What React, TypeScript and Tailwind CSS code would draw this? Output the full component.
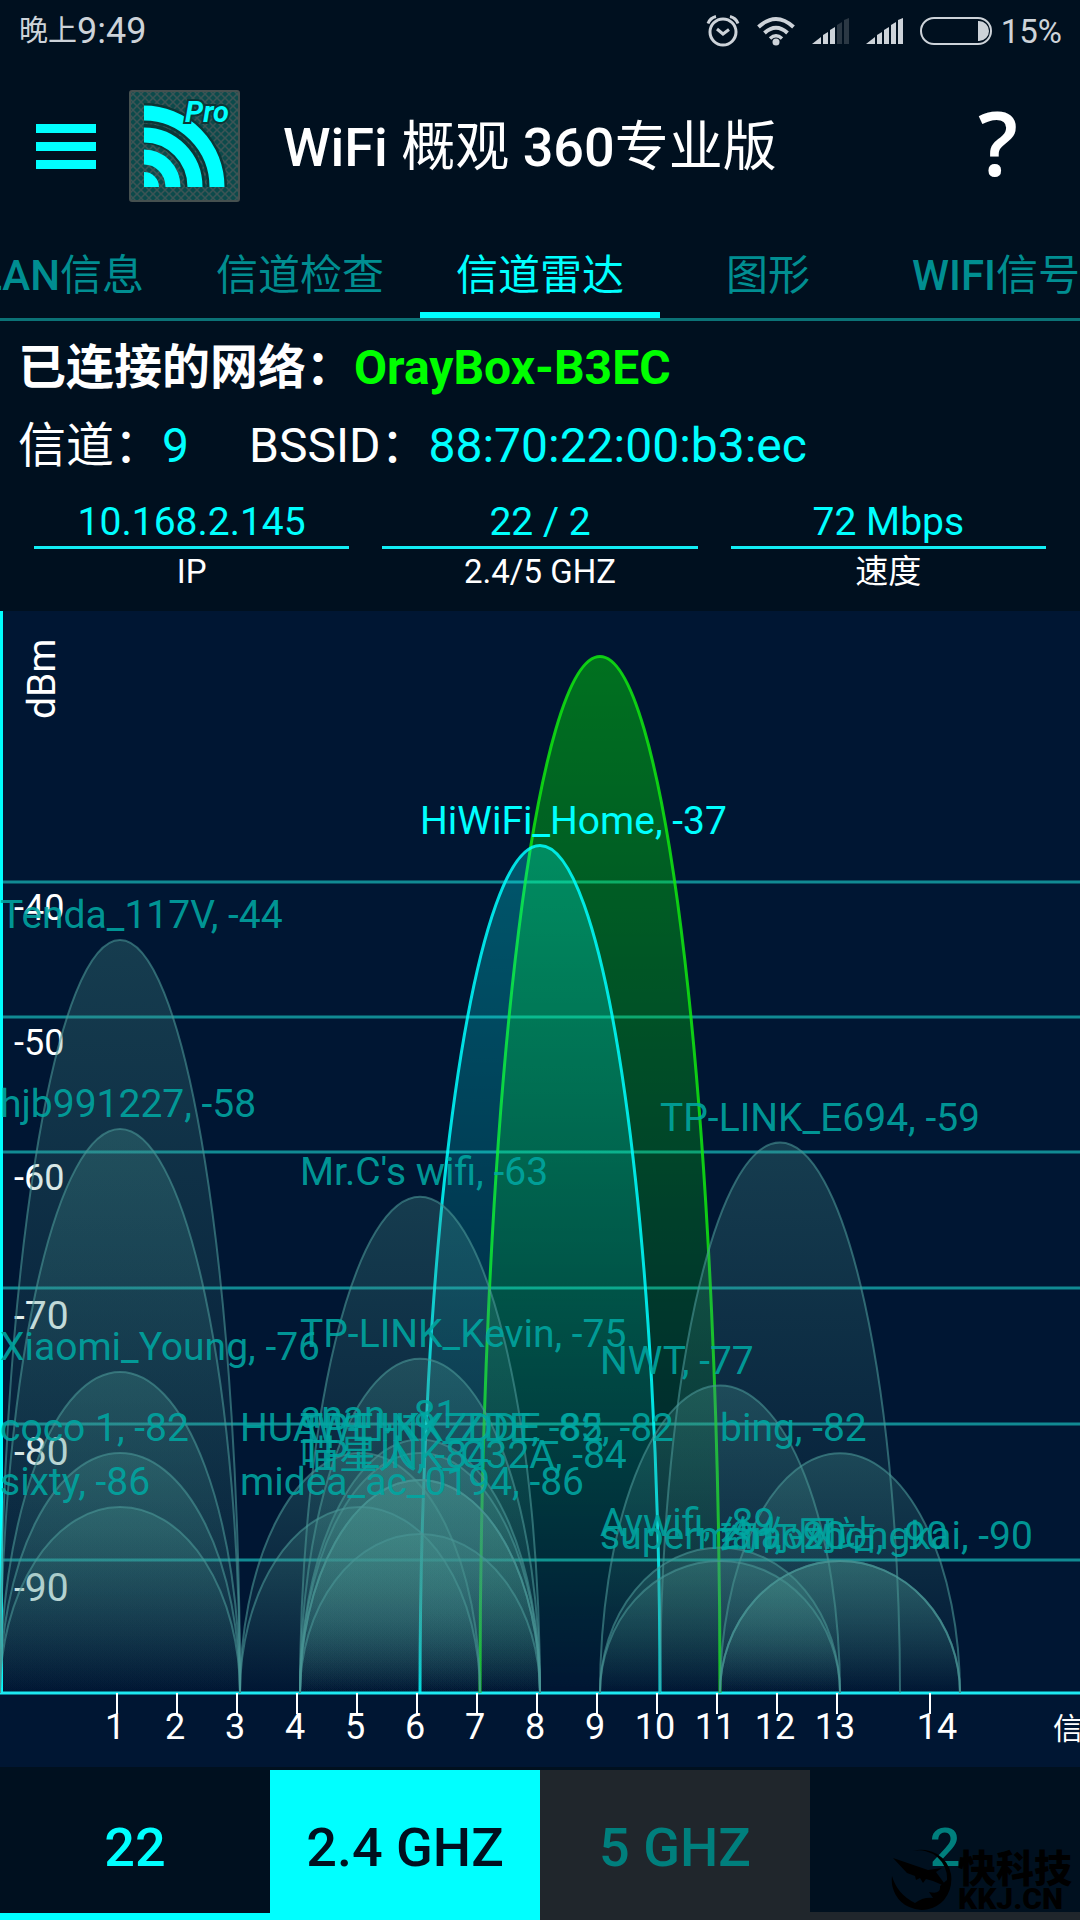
const FONT = "font-[Roboto,'Noto_Sans_CJK_SC',sans-serif]";

type Kind = "weak" | "strong" | "connected";

interface Network {
  label: string;
  channel: number;
  level: number;
  kind?: Kind;
}

const BASE_Y = 1082;

const networks: Network[] = [
  { label: "", channel: 9, level: -23, kind: "connected" },
  { label: "HiWiFi_Home, -37", channel: 8, level: -37, kind: "strong" },
  { label: "Tenda_117V, -44", channel: 1, level: -44 },
  { label: "hjb991227, -58", channel: 1, level: -58 },
  { label: "TP-LINK_E694, -59", channel: 12, level: -59 },
  { label: "Mr.C's wifi, -63", channel: 6, level: -63 },
  { label: "TP-LINK_Kevin, -75", channel: 6, level: -75 },
  { label: "Xiaomi_Young, -76", channel: 1, level: -76 },
  { label: "NWT, -77", channel: 11, level: -77 },
  { label: "anan, -81", channel: 6, level: -81 },
  { label: "TP-LINK_ZDE, -82", channel: 6, level: -82 },
  { label: "HUAWEI-KXZDDE_85, -82", channel: 5, level: -82 },
  { label: "coco 1, -82", channel: 1, level: -82 },
  { label: "bing, -82", channel: 13, level: -82 },
  { label: "TP-LINK_C32A, -84", channel: 6, level: -84 },
  { label: "喵星人, -84", channel: 6, level: -84 },
  { label: "midea_ac_0194, -86", channel: 5, level: -86 },
  { label: "sixty, -86", channel: 1, level: -86 },
  { label: "", channel: 6, level: -88 },
  { label: "Aywifi, -89", channel: 11, level: -89 },
  { label: "superman, -90", channel: 11, level: -90 },
  { label: "约你网站, -90", channel: 13, level: -90 },
  { label: "zhaozhongkai, -90", channel: 13, level: -90 },
];

const gridLines = [
  { y: 271, label: "-40", size: 36, drop: 38 },
  { y: 406, label: "-50", size: 36, drop: 38 },
  { y: 541, label: "-60", size: 36, drop: 38 },
  { y: 677, label: "-70", size: 39, drop: 41 },
  { y: 813, label: "-80", size: 39, drop: 41 },
  { y: 949, label: "-90", size: 39, drop: 41 },
];

const channels = [1, 2, 3, 4, 5, 6, 7, 8, 9, 10, 11, 12, 13, 14];

const strokes: Record<Kind, string> = { weak: "#4a9696", strong: "#00ffff", connected: "#10e810" };
const labelColors: Record<Kind, string> = { weak: "#00a7a2", strong: "#00ffff", connected: "#00ff00" };

const channelX = (n: number) => (n === 14 ? 930 : 57 + n * 60);
const levelY = (level: number) => 949 - 13.5 * (level + 90);

function NetworkCurve({ net }: { net: Network }) {
  const kind = net.kind ?? "weak";
  const left = (net.channel - 2) * 60 + 60;
  const top = levelY(net.level) + 1;
  return (
    <g>
      <path
        d={`M${left} ${BASE_Y} A120 ${BASE_Y - top} 0 0 1 ${left + 240} ${BASE_Y}`}
        fill={`url(#fill-${kind})`}
        stroke={strokes[kind]}
        strokeOpacity={kind === "weak" ? 0.6 : 0.85}
        strokeWidth={kind === "weak" ? 2 : 3}
      />
      <text x={left} y={top - 12} fontSize="39" fill={labelColors[kind]} fillOpacity={kind === "weak" ? 0.9 : 1}>
        {net.label}
      </text>
    </g>
  );
}

function ChannelChart() {
  return (
    <svg viewBox="0 0 1080 1156" className="block w-full bg-[#001633]" role="img" aria-label="信道雷达">
      <defs>
        <linearGradient id="fill-weak" x1="0" y1="0" x2="0" y2="1">
          <stop offset="0" stopColor="#46918c" stopOpacity="0.31" />
          <stop offset="1" stopColor="#46918c" stopOpacity="0" />
        </linearGradient>
        <linearGradient id="fill-strong" x1="0" y1="0" x2="0" y2="1">
          <stop offset="0" stopColor="#00ffff" stopOpacity="0.28" />
          <stop offset="1" stopColor="#00ffff" stopOpacity="0" />
        </linearGradient>
        <linearGradient id="fill-connected" x1="0" y1="0" x2="0" y2="1">
          <stop offset="0" stopColor="#00ff00" stopOpacity="0.39" />
          <stop offset="1" stopColor="#00ff00" stopOpacity="0" />
        </linearGradient>
      </defs>

      {gridLines.map((g) => (
        <g key={g.label}>
          <line x1="0" x2="1080" y1={g.y} y2={g.y} stroke="#118a93" strokeWidth="3" />
          <text x="14" y={g.y + g.drop} fontSize={g.size} fill="#fff">{g.label}</text>
        </g>
      ))}
      <text transform="translate(55 108) rotate(-90)" fontSize="39" fill="#fff">dBm</text>
      <line x1="1" x2="1" y1="0" y2={BASE_Y} stroke="#00ffff" strokeWidth="4" />
      <line x1="0" x2="1080" y1={BASE_Y} y2={BASE_Y} stroke="#1de9f2" strokeWidth="3" />

      {channels.map((n) => (
        <g key={n}>
          <line x1={channelX(n)} x2={channelX(n)} y1={BASE_Y} y2={BASE_Y + 21} stroke="#fff" strokeWidth="2" />
          <text x={n === 14 ? 937 : channelX(n) - 2} y="1128" fontSize="36" textAnchor="middle" fill="#fff">{n}</text>
        </g>
      ))}
      <text x="1053" y="1128" fontSize="30" fill="#fff">信道</text>

      {networks.map((net, i) => <NetworkCurve key={i} net={net} />)}
    </svg>
  );
}

function StatusBar() {
  return (
    <div className="flex h-[62px] items-center justify-between pl-[19px] pr-[18px] text-[#cdd3d9]">
      <div className="flex items-center text-[36px] leading-none">
        <span className="text-[29px]">晚上</span>9:49
      </div>
      <div className="flex items-center gap-[17px]">
        <svg width="34" height="34" viewBox="0 0 34 34" fill="none" stroke="currentColor" strokeWidth="3">
          <circle cx="17" cy="18" r="13" />
          <path d="M11 15l6 5 6-4.500" />
          <path d="M2 9.500Q4 4 10 2.500M32 9.500Q30 4 24 2.500" />
        </svg>
        <svg width="38" height="30" viewBox="0 0 38 30" fill="none" stroke="currentColor" strokeWidth="4">
          <path d="M1.500 11Q19-5 36.500 11" />
          <path d="M7.500 17Q19 6.500 30.500 17" />
          <path d="M13 22.500Q19 17 25 22.500" strokeWidth="3.500" />
          <circle cx="19" cy="26" r="3.500" fill="currentColor" stroke="none" />
        </svg>
        <SignalIcon bars={3} />
        <SignalIcon bars={5} />
        <div className="flex items-center gap-[9px]">
          <svg width="72" height="28" viewBox="0 0 72 28">
            <rect x="1" y="1" width="70" height="26" rx="13" fill="none" stroke="currentColor" strokeWidth="2" />
            <path d="M58 4h1a10 10 0 0 1 0 20h-1z" fill="currentColor" />
          </svg>
          <span className="text-[33px] leading-none">15%</span>
        </div>
      </div>
    </div>
  );
}

function SignalIcon({ bars }: { bars: number }) {
  const shapes = ["M0 26L9 19V26z", "M11 17L16 14V26H11z", "M18 12L23 9V26H18z", "M25 7L30 4V26H25z", "M32 2L37 0V26H32z"];
  return (
    <svg width="37" height="26" viewBox="0 0 37 26">
      {shapes.map((d, i) => <path key={d} d={d} fill={i < bars ? "currentColor" : "#2b3844"} />)}
    </svg>
  );
}

function AppLogo() {
  return (
    <svg width="111" height="112" viewBox="0 0 111 112">
      <defs>
        <pattern id="mesh" width="8" height="8" patternUnits="userSpaceOnUse">
          <rect width="8" height="8" fill="#0c4a4b" />
          <path d="M0 0l8 8M8 0l-8 8" stroke="#3c5455" strokeWidth="1.500" />
        </pattern>
      </defs>
      <rect x="1" y="1" width="109" height="110" rx="2" fill="url(#mesh)" stroke="#45504f" strokeWidth="2" />
      <g fill="none" stroke="#0c3536" strokeWidth="20">
        <path d="M15 44A51 53 0 0 1 66 97" />
        <path d="M15 23A73 74 0 0 1 88 97" />
      </g>
      <g fill="none" stroke="#00ffff" strokeWidth="15">
        <path d="M15 67A29 30 0 0 1 44 97" />
        <path d="M15 45A51 52 0 0 1 66 97" />
        <path d="M15 23A73 74 0 0 1 88 97" />
      </g>
      <path d="M15 82A15 15 0 0 1 30 97H15z" fill="#00ffff" />
      <text x="56" y="32" fontSize="29" fontWeight="700" fontStyle="italic" fill="#00ffff" stroke="#0c3536" strokeWidth="4" paintOrder="stroke">Pro</text>
    </svg>
  );
}

function Header() {
  return (
    <header className="flex h-[168px] items-center pl-9 pr-[62px]">
      <button aria-label="菜单" className="flex w-[60px] flex-col gap-[9px]">
        <span className="h-[9px] w-full bg-[#00ffff]" />
        <span className="h-[9px] w-full bg-[#00ffff]" />
        <span className="h-[9px] w-full bg-[#00ffff]" />
      </button>
      <div className="ml-[33px]"><AppLogo /></div>
      <h1 className="ml-[43px] flex-1 pt-1 text-[54px] font-medium leading-none text-white">
        WiFi <span className="font-normal">概观</span> 360<span className="font-normal">专业版</span>
      </h1>
      <button aria-label="帮助" className="pb-2 font-['Open_Sans',sans-serif] text-[88px] font-semibold leading-none text-white">?</button>
    </header>
  );
}

const tabClass = "shrink-0 whitespace-nowrap px-9 pb-3 text-[42px] font-medium leading-[60px] text-[#008e91]";

function Tabs() {
  return (
    <nav className="flex h-[91px] items-end border-b-[3px] border-[#0b7276]">
      <div className="flex min-w-0 flex-1 justify-end overflow-hidden">
        <button className={tabClass}>WLAN<span className="font-normal">信息</span></button>
        <button className={tabClass}><span className="font-normal">信道检查</span></button>
      </div>
      <button aria-current="page" className="shrink-0 whitespace-nowrap border-b-[6px] border-[#00ffff] px-9 pb-[6px] text-[42px] leading-[60px] text-[#00ffff]">信道雷达</button>
      <div className="flex min-w-0 flex-1 overflow-hidden">
        <button className={`${tabClass} min-w-[216px]`}><span className="font-normal">图形</span></button>
        <button className={tabClass}>WIFI<span className="font-normal">信号</span></button>
      </div>
    </nav>
  );
}

const stats = [
  { value: "10.168.2.145", label: "IP" },
  { value: "22 / 2", label: "2.4/5 GHZ" },
  { value: "72 Mbps", label: "速度" },
];

function ConnectionInfo() {
  return (
    <section className="pb-4 pt-[11px]">
      <p className="px-[18px] text-[48px] font-bold leading-[72px] text-white">
        已连接的网络：<span className="text-[#00ff00]">OrayBox-B3EC</span>
      </p>
      <p className="mt-1 flex px-[18px] text-[48px] leading-[76px] text-white">
        <span>信道：<span className="text-[#00ffff]">9</span></span>
        <span className="ml-[60px]">BSSID：<span className="text-[#00ffff]">88:70:22:00:b3:ec</span></span>
      </p>
      <div className="mt-3 grid grid-cols-3 gap-[33px] px-[34px] text-center">
        {stats.map((s) => (
          <div key={s.label}>
            <p className="border-b-[3px] border-[#12eef5] pt-[2px] text-[39px] leading-[48px] text-[#00ffff]">{s.value}</p>
            <p className="text-[33px] leading-[46px] text-white">{s.label}</p>
          </div>
        ))}
      </div>
    </section>
  );
}

function BandBar() {
  return (
    <footer className="relative grid grid-cols-4 bg-[#00101f] pt-[3px] text-center text-[54px] font-medium leading-[156px]">
      <div className="h-[150px] border-b-[7px] border-[#00ffff] text-[#00ffff]">22</div>
      <button className="h-[150px] bg-[#00ffff] text-[#00101f]">2.4 GHZ</button>
      <button className="h-[150px] bg-[#20262c] text-[#007f7d]">5 GHZ</button>
      <div className="h-[150px] border-b-[8px] border-[#20262c] text-[#007f7d]">2</div>
      <Watermark />
    </footer>
  );
}

function Watermark() {
  return (
    <div className="absolute bottom-[9px] right-[8px] flex items-center gap-[5px] text-black">
      <svg width="62" height="62" viewBox="0 0 62 62">
        <path d="M22 2A30 30 0 0 1 60 25Q62 40 53 51A30 30 0 0 1 1 27Q6 45 24 54Q32 48 42 49L38 43Q50 46 49 37L56 31A28 28 0 0 0 22 2z" />
        <path d="M2 9L37 21L51 19L45 23L56 38L42 32L35 30L32 34L29 29L25 31L24 27L16 24z" />
      </svg>
      <div className="flex flex-col items-start">
        <span className="text-[38px] font-black leading-[38px]">快科技</span>
        <span className="text-[30px] font-black leading-[22px]">KKJ.CN</span>
      </div>
    </div>
  );
}

export default function App() {
  return (
    <div className={`min-h-screen overflow-hidden bg-[#00101f] ${FONT}`}>
      <StatusBar />
      <Header />
      <Tabs />
      <ConnectionInfo />
      <ChannelChart />
      <BandBar />
    </div>
  );
}
